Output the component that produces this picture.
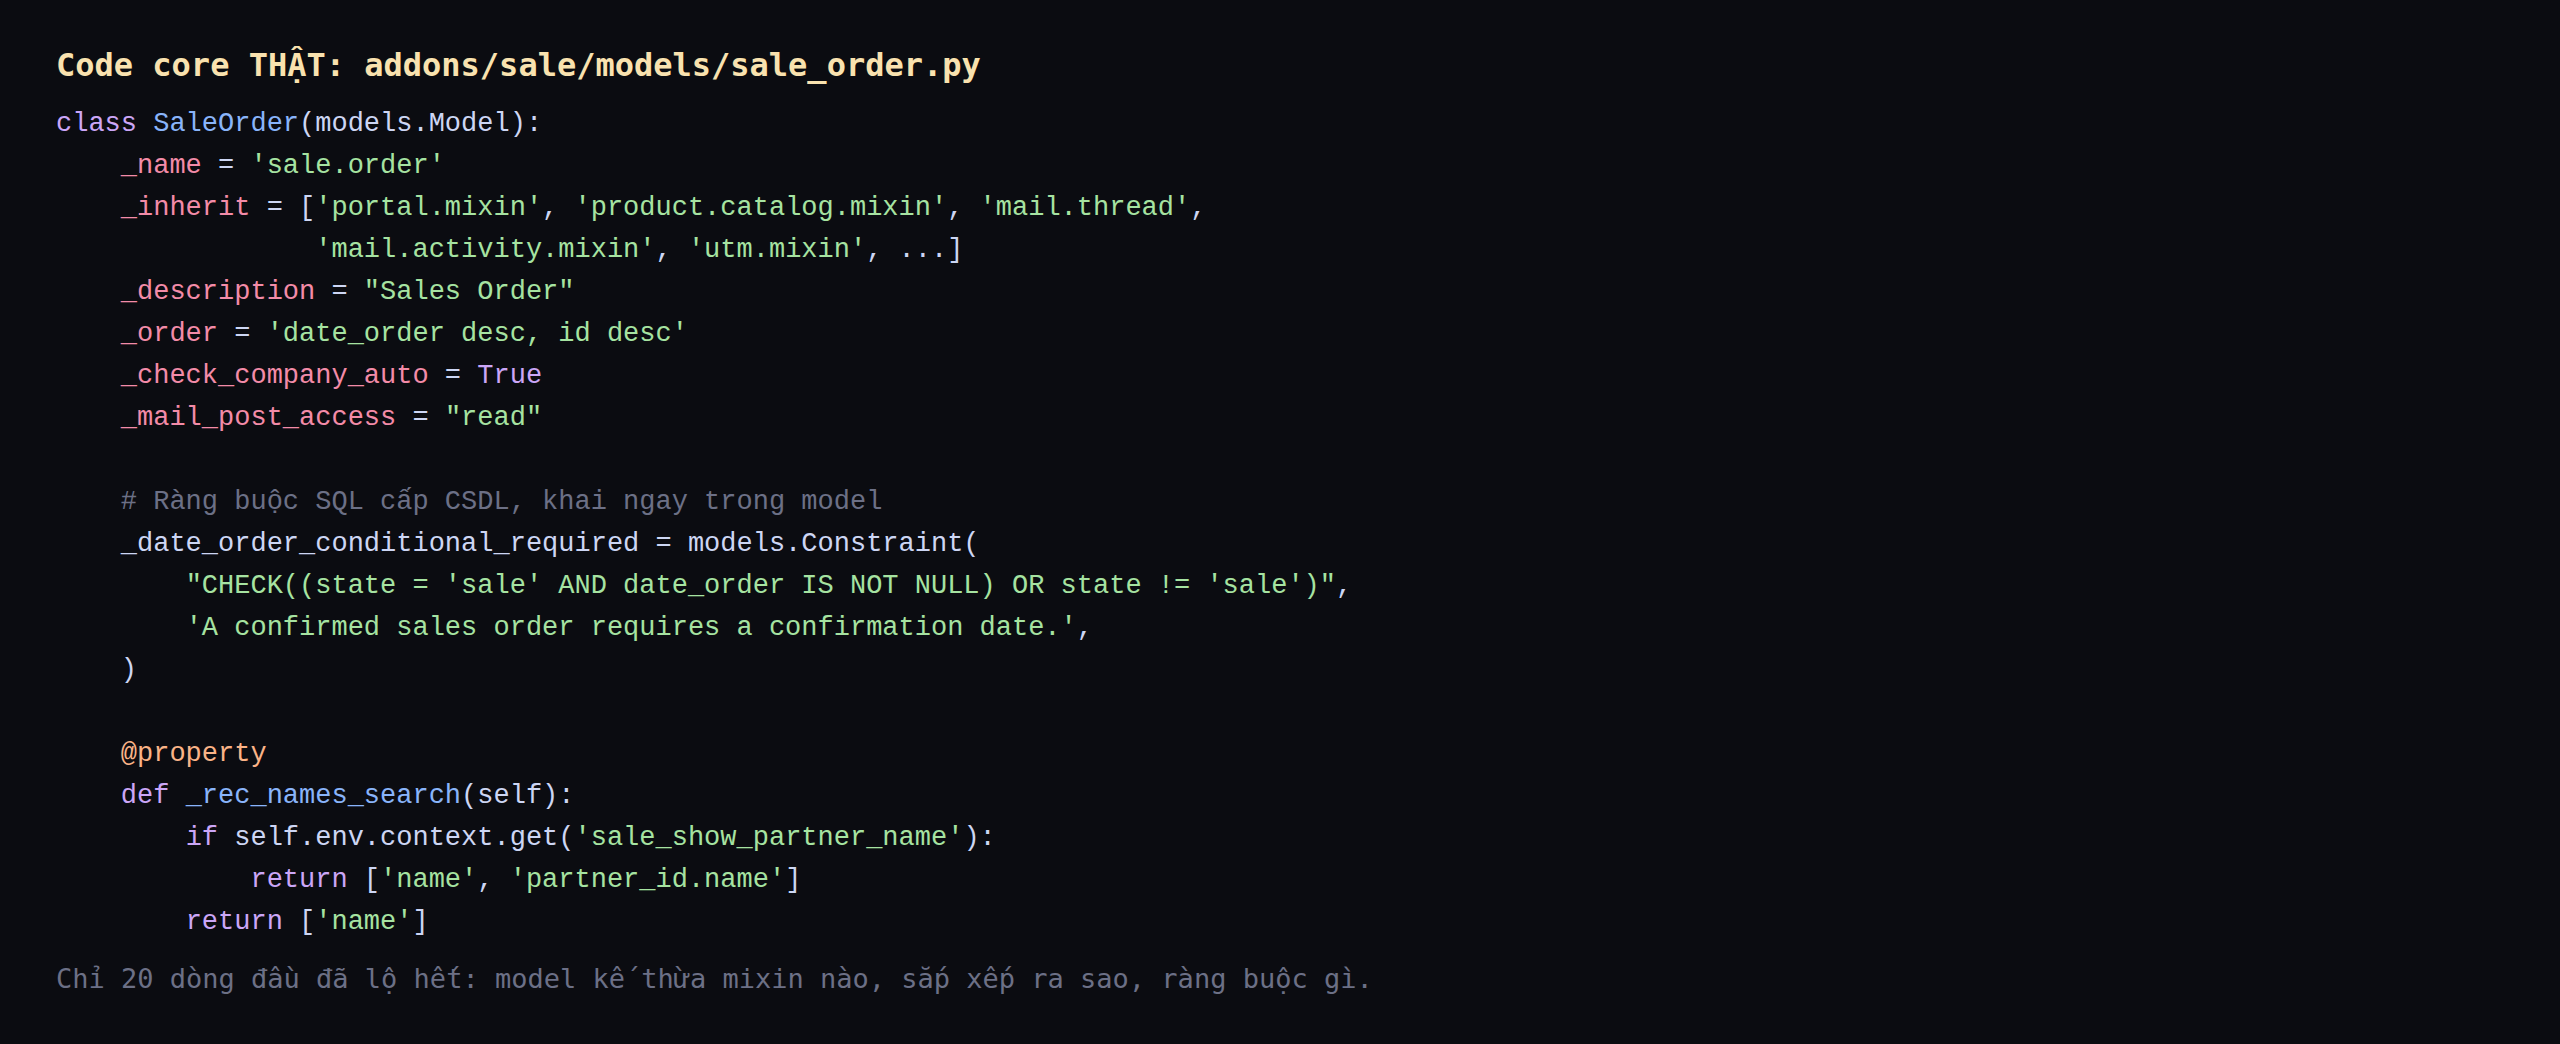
import React from "react";

type Tok = [string, string];

const C = {
  kw: "text-[#cba6f7]",
  fn: "text-[#89b4fa]",
  tx: "text-[#cdd6f4]",
  at: "text-[#f38ba8]",
  st: "text-[#a6e3a1]",
  dc: "text-[#fab387]",
  cm: "text-[#6c7086]",
};

// precomposed Vietnamese so the fallback font does not split the marks
const TITLE = "Code core TH\u1EACT: addons/sale/models/sale_order.py";
const COMMENT = "# R\u00E0ng bu\u1ED9c SQL c\u1EA5p CSDL, khai ngay trong model";
const NOTE =
  "Ch\u1EC9 20 d\u00F2ng \u0111\u1EA7u \u0111\u00E3 l\u1ED9 h\u1EBFt: model k\u1EBF th\u1EEBa mixin n\u00E0o, s\u1EAFp x\u1EBFp ra sao, r\u00E0ng bu\u1ED9c g\u00EC.";

const LINES: Tok[][] = [
  [["class", C.kw], [" ", C.tx], ["SaleOrder", C.fn], ["(models.Model):", C.tx]],
  [["    ", C.tx], ["_name", C.at], [" = ", C.tx], ["'sale.order'", C.st]],
  [
    ["    ", C.tx],
    ["_inherit", C.at],
    [" = [", C.tx],
    ["'portal.mixin'", C.st],
    [", ", C.tx],
    ["'product.catalog.mixin'", C.st],
    [", ", C.tx],
    ["'mail.thread'", C.st],
    [",", C.tx],
  ],
  [
    ["                ", C.tx],
    ["'mail.activity.mixin'", C.st],
    [", ", C.tx],
    ["'utm.mixin'", C.st],
    [", ...]", C.tx],
  ],
  [["    ", C.tx], ["_description", C.at], [" = ", C.tx], ['"Sales Order"', C.st]],
  [["    ", C.tx], ["_order", C.at], [" = ", C.tx], ["'date_order desc, id desc'", C.st]],
  [["    ", C.tx], ["_check_company_auto", C.at], [" = ", C.tx], ["True", C.kw]],
  [["    ", C.tx], ["_mail_post_access", C.at], [" = ", C.tx], ['"read"', C.st]],
  [],
  [["    ", C.tx], [COMMENT, C.cm]],
  [["    _date_order_conditional_required = models.Constraint(", C.tx]],
  [
    ["        ", C.tx],
    ["\"CHECK((state = 'sale' AND date_order IS NOT NULL) OR state != 'sale')\"", C.st],
    [",", C.tx],
  ],
  [["        ", C.tx], ["'A confirmed sales order requires a confirmation date.'", C.st], [",", C.tx]],
  [["    )", C.tx]],
  [],
  [["    ", C.tx], ["@property", C.dc]],
  [["    ", C.tx], ["def", C.kw], [" ", C.tx], ["_rec_names_search", C.fn], ["(self):", C.tx]],
  [
    ["        ", C.tx],
    ["if", C.kw],
    [" self.env.context.get(", C.tx],
    ["'sale_show_partner_name'", C.st],
    ["):", C.tx],
  ],
  [
    ["            ", C.tx],
    ["return", C.kw],
    [" [", C.tx],
    ["'name'", C.st],
    [", ", C.tx],
    ["'partner_id.name'", C.st],
    ["]", C.tx],
  ],
  [["        ", C.tx], ["return", C.kw], [" [", C.tx], ["'name'", C.st], ["]", C.tx]],
];

export default function App() {
  return (
    <div className="min-h-[1044px] w-full bg-[#0b0c11] pl-[56px] pt-[45px]">
      {/* Heading */}
      <h1 className="font-['DejaVu_Sans_Mono',monospace] text-[32px] leading-[40px] font-bold text-[#f9e2af]">
        {TITLE}
      </h1>

      {/* Code block */}
      <pre className="mt-[18px] font-['Liberation_Mono','DejaVu_Sans_Mono',monospace] text-[27px] leading-[42px] whitespace-pre">
        {LINES.map((line, i) => (
          <div key={i} className="h-[42px]">
            {line.map(([t, c], j) => (
              <span key={j} className={c}>
                {t}
              </span>
            ))}
          </div>
        ))}
      </pre>

      {/* Footnote */}
      <p className="mt-[16px] font-['DejaVu_Sans_Mono',monospace] text-[27px] leading-[40px] text-[#6c7086]">
        {NOTE}
      </p>
    </div>
  );
}
